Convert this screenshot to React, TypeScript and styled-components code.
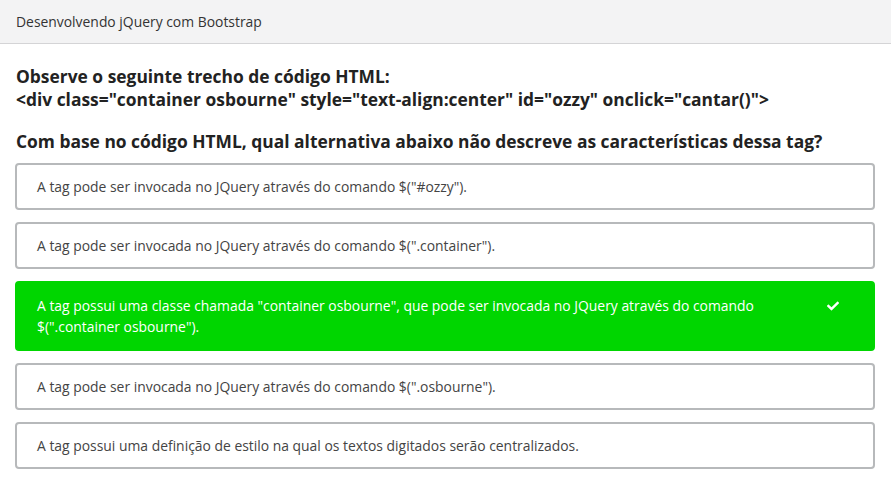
import React from "react";
import styled, { createGlobalStyle } from "styled-components";
import { FaCheck } from "react-icons/fa";

const Global = createGlobalStyle`
  html, body { margin: 0; padding: 0; background: #fff; }
  body { font-family: "Open Sans", "Liberation Sans", sans-serif; color: #333; }
`;

const Header = styled.div`
  height: 43px;
  display: flex;
  align-items: center;
  padding: 0 16px;
  background: #f3f3f4;
  border-bottom: 1px solid #d4d4d6;
  font-size: 13.9px;
  color: #333;
`;

const Content = styled.div`
  padding: 21px 16px 0 15px;
`;

const Title = styled.h2`
  margin: 0 0 0 1px;
  font-size: 17.4px;
  font-weight: 700;
  line-height: 23px;
  color: #222;
`;

const Question = styled(Title)`
  margin-top: 19px;
  margin-bottom: 10px;
`;

const Options = styled.div`
  display: flex;
  flex-direction: column;
  gap: 12px;
`;

const Option = styled.div<{ $correct?: boolean }>`
  display: flex;
  align-items: flex-start;
  justify-content: space-between;
  gap: 40px;
  padding: ${(p) => (p.$correct ? "12px" : "11px")} 34px ${(p) => (p.$correct ? "12px" : "11px")} 20px;
  border: 2px solid ${(p) => (p.$correct ? "#00d600" : "#b7b9bb")};
  border-radius: 4px;
  background: ${(p) => (p.$correct ? "#00d600" : "#fff")};
  color: ${(p) => (p.$correct ? "#fff" : "#444")};
  font-size: 13.9px;
  line-height: 21px;
`;

const OptionText = styled.span`
  max-width: 760px;
`;

const Check = styled.span`
  display: flex;
  align-items: center;
  height: 21px;
  font-size: 12px;
  color: #fff;
`;

const options = [
  { text: 'A tag pode ser invocada no JQuery através do comando $("#ozzy").' },
  { text: 'A tag pode ser invocada no JQuery através do comando $(".container").' },
  {
    text: 'A tag possui uma classe chamada "container osbourne", que pode ser invocada no JQuery através do comando $(".container osbourne").',
    correct: true,
  },
  { text: 'A tag pode ser invocada no JQuery através do comando $(".osbourne").' },
  { text: "A tag possui uma definição de estilo na qual os textos digitados serão centralizados." },
];

export default function App() {
  return (
    <>
      <Global />
      <Header>Desenvolvendo jQuery com Bootstrap</Header>
      <Content>
        <Title>
          Observe o seguinte trecho de código HTML:
          <br />
          {'<div class="container osbourne" style="text-align:center" id="ozzy" onclick="cantar()">'}
        </Title>
        <Question>Com base no código HTML, qual alternativa abaixo não descreve as características dessa tag?</Question>
        <Options>
          {options.map((o, i) => (
            <Option key={i} $correct={o.correct}>
              <OptionText>{o.text}</OptionText>
              {o.correct && (
                <Check>
                  <FaCheck />
                </Check>
              )}
            </Option>
          ))}
        </Options>
      </Content>
    </>
  );
}
